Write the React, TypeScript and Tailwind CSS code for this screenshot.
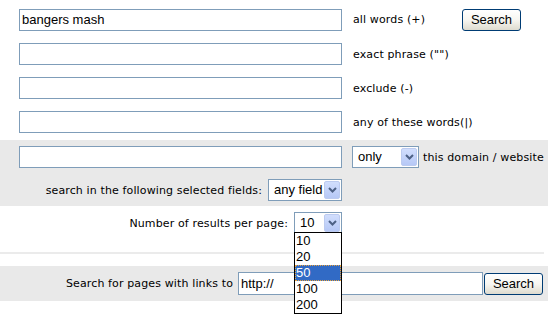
const arial = "font-['Liberation_Sans',Arial,sans-serif]";
const label = "font-['DejaVu_Sans',Verdana,sans-serif] text-[11px] tracking-[0.13px] text-black leading-none";

const TextBox = ({ value = "", className = "" }: { value?: string; className?: string }) => (
  <div
    className={`h-[22px] border border-[#7f9db9] bg-white pl-[2px] flex items-center text-[13px] text-black ${arial} ${className}`}
  >
    {value}
  </div>
);

const Button = ({ className = "" }: { className?: string }) => (
  <div
    className={`h-[22px] rounded-[3px] border border-[#003c74] bg-gradient-to-b from-white via-[#f7f6f1] to-[#dedbcf] flex items-center justify-center text-[13px] text-black ${arial} ${className}`}
  >
    Search
  </div>
);

const Select = ({ value, className = "" }: { value: string; className?: string }) => (
  <div
    className={`h-[22px] border border-[#7f9db9] bg-white flex items-center pl-[5px] pr-[1px] text-[13px] text-black ${arial} ${className}`}
  >
    <span className="flex-1">{value}</span>
    <div className="w-[16px] h-[18px] rounded-[2px] border border-[#bccbf0] bg-gradient-to-b from-[#d1defd] to-[#b6c8f6] flex items-center justify-center">
      <svg width="9" height="6" viewBox="0 0 9 6">
        <path d="M1 1 L4.5 4.5 L8 1" stroke="#4d6185" strokeWidth="2" fill="none" />
      </svg>
    </div>
  </div>
);

const options = ["10", "20", "50", "100", "200"];

export default function App() {
  return (
    <div className="relative w-[552px] h-[318px] bg-white overflow-hidden">
      {/* main keyword fields */}
      <div className="pt-[8px] flex flex-col gap-[12px]">
        <div className="flex items-center">
          <TextBox value="bangers mash" className="ml-[19px] w-[323px]" />
          <span className={`${label} ml-[11px] w-[109px]`}>all words (+)</span>
          <Button className="w-[59px] mt-[1px]" />
        </div>
        <div className="flex items-center">
          <TextBox className="ml-[19px] w-[323px]" />
          <span className={`${label} ml-[11px]`}>exact phrase ("")</span>
        </div>
        <div className="flex items-center">
          <TextBox className="ml-[19px] w-[323px]" />
          <span className={`${label} ml-[11px]`}>exclude (-)</span>
        </div>
        <div className="flex items-center">
          <TextBox className="ml-[19px] w-[323px]" />
          <span className={`${label} ml-[11px]`}>any of these words(|)</span>
        </div>
      </div>

      {/* domain + fields */}
      <div className="mt-[7px] w-[548px] bg-[#e9e9e9] pt-[6px] pb-[5px]">
        <div className="flex items-center">
          <TextBox className="ml-[19px] w-[323px]" />
          <Select value="only" className="ml-[10px] w-[67px]" />
          <span className={`${label} ml-[4px]`}>this domain / website</span>
        </div>
        <div className="flex items-center mt-[11px]">
          <span className={`${label} w-[262px] text-right`}>search in the following selected fields:</span>
          <Select value="any field" className="ml-[6px] w-[74px] h-[21px] pl-[2px]" />
        </div>
      </div>

      {/* results per page */}
      <div className="flex items-center pt-[6px]">
        <span className={`${label} w-[288px] text-right`}>Number of results per page:</span>
        <Select value="10" className="ml-[6px] w-[48px] h-[21px]" />
      </div>

      <div className="mt-[18px] w-[544px] h-[2px] bg-[#ebebeb]" />

      {/* links search */}
      <div className="mt-[12px] w-[548px] h-[35px] bg-[#e9e9e9] flex items-center">
        <span className={`${label} w-[233px] text-right`}>Search for pages with links to</span>
        <TextBox value="http://" className="ml-[5px] w-[245px] h-[23px]" />
        <Button className="ml-[1px] w-[59px]" />
      </div>

      {/* open dropdown list */}
      <div className={`absolute left-[294px] top-[232px] w-[48px] border border-black bg-white text-[13px] text-black ${arial}`}>
        {options.map((o) => (
          <div
            key={o}
            className={
              o === "50"
                ? "h-[16px] leading-[16px] pl-[1px] bg-[#316ac5] text-white outline-1 outline-dotted outline-[#e8a33d] -outline-offset-1"
                : "h-[16px] leading-[16px] pl-[1px]"
            }
          >
            {o}
          </div>
        ))}
      </div>
    </div>
  );
}
